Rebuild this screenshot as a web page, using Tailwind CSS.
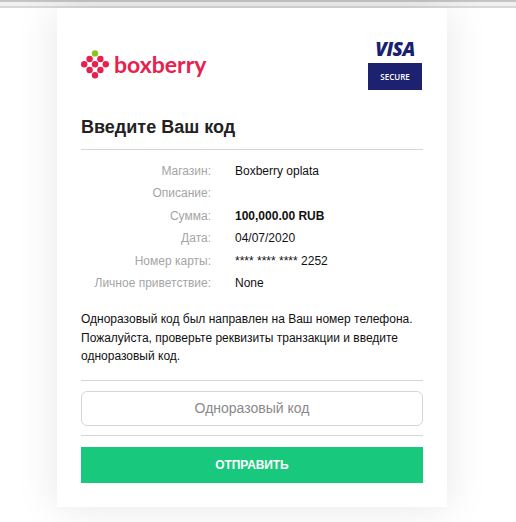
<!doctype html>
<html><head><meta charset="utf-8"><script src="https://cdn.jsdelivr.net/npm/@tailwindcss/browser@4"></script></head>
<body class="bg-white font-['Liberation_Sans',Arial,sans-serif] text-[#111]">
<div class="relative h-[522px] w-[516px] overflow-hidden bg-white">
  <div class="h-[2px] bg-[#c4c4c4]"></div>
  <div class="h-[4px] bg-[#f0f0f0]"></div>
  <div class="h-[2px] bg-[#d8d8d8]"></div>
  <div class="ml-[57px] h-[499px] w-[390px] bg-white px-6 shadow-[0_0_40px_rgba(0,0,0,0.10)]">
    <div class="flex items-start justify-between pt-[33px]">
      <div class="flex h-[46px] items-center gap-[5px]">
        <svg width="28" height="29" viewBox="0 0 28 29" class="mt-[1px]">
          <g fill="#e8204f"><circle cx="3.2" cy="14.3" r="3.2"/><circle cx="14" cy="14.3" r="3.2"/><circle cx="24.8" cy="14.3" r="3.2"/><circle cx="8.6" cy="9" r="3.2"/><circle cx="19.4" cy="9" r="3.2"/><circle cx="8.6" cy="20" r="3.2"/><circle cx="19.4" cy="20" r="3.2"/><circle cx="14" cy="25.3" r="3.2"/></g>
          <circle cx="14" cy="3.4" r="3.2" fill="#8cc21f"/>
        </svg>
        <span class="font-['Lato'] text-[23px] leading-none font-bold text-[#e8204f]">boxberry</span>
      </div>
      <div class="mr-px flex w-[54px] flex-col items-center">
        <span class="font-['Open_Sans'] text-[19px] leading-[17px] font-extrabold italic tracking-[-0.5px] text-[#1a1f71]">VISA</span>
        <div class="mt-[5px] flex h-[27px] w-[54px] items-center justify-center bg-[#1d2270] font-['Open_Sans'] text-[8px] font-semibold text-white">SECURE</div>
      </div>
    </div>
    <h1 class="mt-[25px] text-[18px] leading-[24px] font-bold text-[#222]">Введите Ваш код</h1>
    <div class="mt-[10px] h-px bg-[#d6d6d6]"></div>
    <dl class="mt-[10px] grid grid-cols-[130px_1fr] gap-x-[24px] text-[12px] leading-[22.4px]">
      <dt class="text-right text-[#a5a5a5]">Магазин:</dt><dd>Boxberry oplata</dd>
      <dt class="text-right text-[#a5a5a5]">Описание:</dt><dd></dd>
      <dt class="text-right text-[#a5a5a5]">Сумма:</dt><dd class="font-bold">100,000.00 RUB</dd>
      <dt class="text-right text-[#a5a5a5]">Дата:</dt><dd>04/07/2020</dd>
      <dt class="text-right text-[#a5a5a5]">Номер карты:</dt><dd>**** **** **** 2252</dd>
      <dt class="text-right text-[#a5a5a5]">Личное приветствие:</dt><dd>None</dd>
    </dl>
    <p class="mt-[16px] text-[12px] leading-[18.5px]">Одноразовый код был направлен на Ваш номер телефона. Пожалуйста, проверьте реквизиты транзакции и введите одноразовый код.</p>
    <div class="mt-[14px] h-px bg-[#d6d6d6]"></div>
    <input placeholder="Одноразовый код" class="mt-[10px] block h-[35px] w-full rounded-md border border-[#d6d6d6] bg-white text-center text-[14px] placeholder:text-[#8a8a8a]">
    <div class="mt-[9px] h-px bg-[#d6d6d6]"></div>
    <button class="mt-[11px] block h-[36px] w-full bg-[#18c87c] text-[12px] font-bold tracking-[-0.1px] text-white">ОТПРАВИТЬ</button>
  </div>
</div>
</body></html>
